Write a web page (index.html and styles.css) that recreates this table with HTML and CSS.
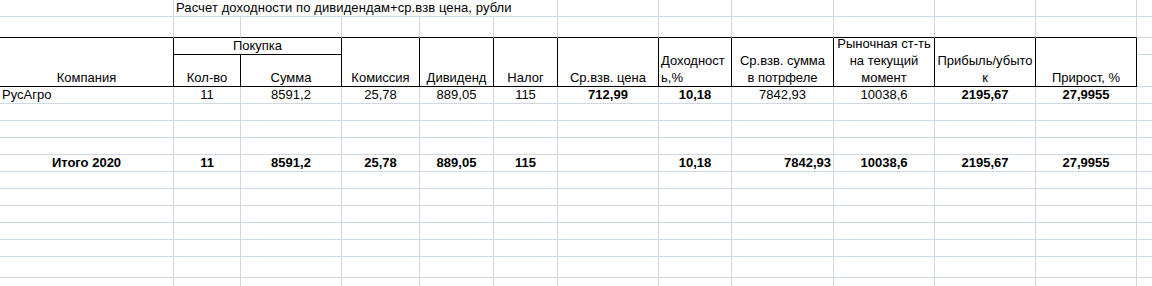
FILE: index.html
```html
<!DOCTYPE html>
<html lang="ru">
<head>
<meta charset="utf-8">
<title>Расчет доходности</title>
<link rel="stylesheet" href="styles.css">
</head>
<body>
<div class="sheet">
  <!-- row 1 -->
  <div class="c"></div>
  <div class="c title">Расчет доходности по дивидендам+ср.взв цена, рубли</div>
  <div class="c"></div><div class="c"></div><div class="c"></div><div class="c"></div><div class="c"></div><div class="c"></div><div class="c"></div>
  <!-- row 2 -->
  <div class="c top"></div><div class="c top"></div><div class="c top"></div><div class="c top"></div><div class="c top"></div><div class="c top"></div><div class="c top"></div><div class="c top"></div><div class="c top"></div><div class="c top"></div><div class="c top"></div><div class="c top"></div><div class="c"></div>
  <!-- rows 3-4 header -->
  <div class="c h tall"><span>Компания</span></div>
  <div class="c h wide"><span>Покупка</span></div>
  <div class="c h tall"><span>Комиссия</span></div>
  <div class="c h tall"><span>Дивиденд</span></div>
  <div class="c h tall"><span>Налог</span></div>
  <div class="c h tall"><span>Ср.взв. цена</span></div>
  <div class="c h tall left"><span>Доходност<br>ь,%</span></div>
  <div class="c h tall"><span>Ср.взв. сумма<br>в потрфеле</span></div>
  <div class="c h tall"><span>Рыночная ст-ть<br>на текущий<br>момент</span></div>
  <div class="c h tall"><span>Прибыль/убыто<br>к</span></div>
  <div class="c h tall"><span>Прирост, %</span></div>
  <div class="c"></div>
  <div class="c h"><span>Кол-во</span></div>
  <div class="c h"><span>Сумма</span></div>
  <div class="c"></div>
  <!-- row 5 data -->
  <div class="c">РусАгро</div>
  <div class="c ctr">11</div>
  <div class="c ctr">8591,2</div>
  <div class="c ctr">25,78</div>
  <div class="c ctr">889,05</div>
  <div class="c ctr">115</div>
  <div class="c ctr b">712,99</div>
  <div class="c ctr b">10,18</div>
  <div class="c ctr">7842,93</div>
  <div class="c ctr">10038,6</div>
  <div class="c ctr b">2195,67</div>
  <div class="c ctr b">27,9955</div>
  <div class="c"></div>
  <!-- rows 6-8 empty -->
  <div class="c"></div><div class="c"></div><div class="c"></div><div class="c"></div><div class="c"></div><div class="c"></div><div class="c"></div><div class="c"></div><div class="c"></div><div class="c"></div><div class="c"></div><div class="c"></div><div class="c"></div>
  <div class="c"></div><div class="c"></div><div class="c"></div><div class="c"></div><div class="c"></div><div class="c"></div><div class="c"></div><div class="c"></div><div class="c"></div><div class="c"></div><div class="c"></div><div class="c"></div><div class="c"></div>
  <div class="c"></div><div class="c"></div><div class="c"></div><div class="c"></div><div class="c"></div><div class="c"></div><div class="c"></div><div class="c"></div><div class="c"></div><div class="c"></div><div class="c"></div><div class="c"></div><div class="c"></div>
  <!-- row 9 total -->
  <div class="c ctr b">Итого 2020</div>
  <div class="c ctr b">11</div>
  <div class="c ctr b">8591,2</div>
  <div class="c ctr b">25,78</div>
  <div class="c ctr b">889,05</div>
  <div class="c ctr b">115</div>
  <div class="c"></div>
  <div class="c ctr b">10,18</div>
  <div class="c rt b">7842,93</div>
  <div class="c ctr b">10038,6</div>
  <div class="c ctr b">2195,67</div>
  <div class="c ctr b">27,9955</div>
  <div class="c"></div>
  <!-- rows 10-16 empty -->
  <div class="c"></div><div class="c"></div><div class="c"></div><div class="c"></div><div class="c"></div><div class="c"></div><div class="c"></div><div class="c"></div><div class="c"></div><div class="c"></div><div class="c"></div><div class="c"></div><div class="c"></div>
  <div class="c"></div><div class="c"></div><div class="c"></div><div class="c"></div><div class="c"></div><div class="c"></div><div class="c"></div><div class="c"></div><div class="c"></div><div class="c"></div><div class="c"></div><div class="c"></div><div class="c"></div>
  <div class="c"></div><div class="c"></div><div class="c"></div><div class="c"></div><div class="c"></div><div class="c"></div><div class="c"></div><div class="c"></div><div class="c"></div><div class="c"></div><div class="c"></div><div class="c"></div><div class="c"></div>
  <div class="c"></div><div class="c"></div><div class="c"></div><div class="c"></div><div class="c"></div><div class="c"></div><div class="c"></div><div class="c"></div><div class="c"></div><div class="c"></div><div class="c"></div><div class="c"></div><div class="c"></div>
  <div class="c"></div><div class="c"></div><div class="c"></div><div class="c"></div><div class="c"></div><div class="c"></div><div class="c"></div><div class="c"></div><div class="c"></div><div class="c"></div><div class="c"></div><div class="c"></div><div class="c"></div>
  <div class="c"></div><div class="c"></div><div class="c"></div><div class="c"></div><div class="c"></div><div class="c"></div><div class="c"></div><div class="c"></div><div class="c"></div><div class="c"></div><div class="c"></div><div class="c"></div><div class="c"></div>
  <div class="c"></div><div class="c"></div><div class="c"></div><div class="c"></div><div class="c"></div><div class="c"></div><div class="c"></div><div class="c"></div><div class="c"></div><div class="c"></div><div class="c"></div><div class="c"></div><div class="c"></div>
</div>
</body>
</html>
```

FILE: styles.css
```css
html, body {
  margin: 0;
  padding: 0;
  background: #fff;
  overflow: hidden;
}

body {
  width: 1152px;
  height: 286px;
  font-family: "Liberation Sans", Arial, sans-serif;
  font-size: 13px;
  color: #000;
}

.sheet {
  display: grid;
  grid-template-columns: 174px 67px 101px 78px 74px 64px 101px 73px 102px 101px 101px 101px 64px;
  grid-template-rows: 17px 21px 17px 32px repeat(10, 17px) 21px 17px;
  width: max-content;
}

.c {
  box-sizing: border-box;
  border-right: 1px solid #d0d7e5;
  border-bottom: 1px solid #d0d7e5;
  padding: 0 2px;
  line-height: 16px;
  display: flex;
  align-items: flex-end;
  white-space: nowrap;
  overflow: hidden;
  min-width: 0;
}

.title {
  grid-column: span 5;
  overflow: visible;
  letter-spacing: 0.1px;
}

.top {
  border-bottom-color: #000;
}

.ctr { justify-content: center; }
.rt { justify-content: flex-end; }
.b { font-weight: bold; }

.h {
  border-right-color: #000;
  border-bottom-color: #000;
  justify-content: center;
  line-height: 17px;
  text-align: center;
  overflow: visible;
}

.h.left {
  justify-content: flex-start;
  text-align: left;
}

.tall { grid-row: span 2; }
.wide { grid-column: span 2; }
```
